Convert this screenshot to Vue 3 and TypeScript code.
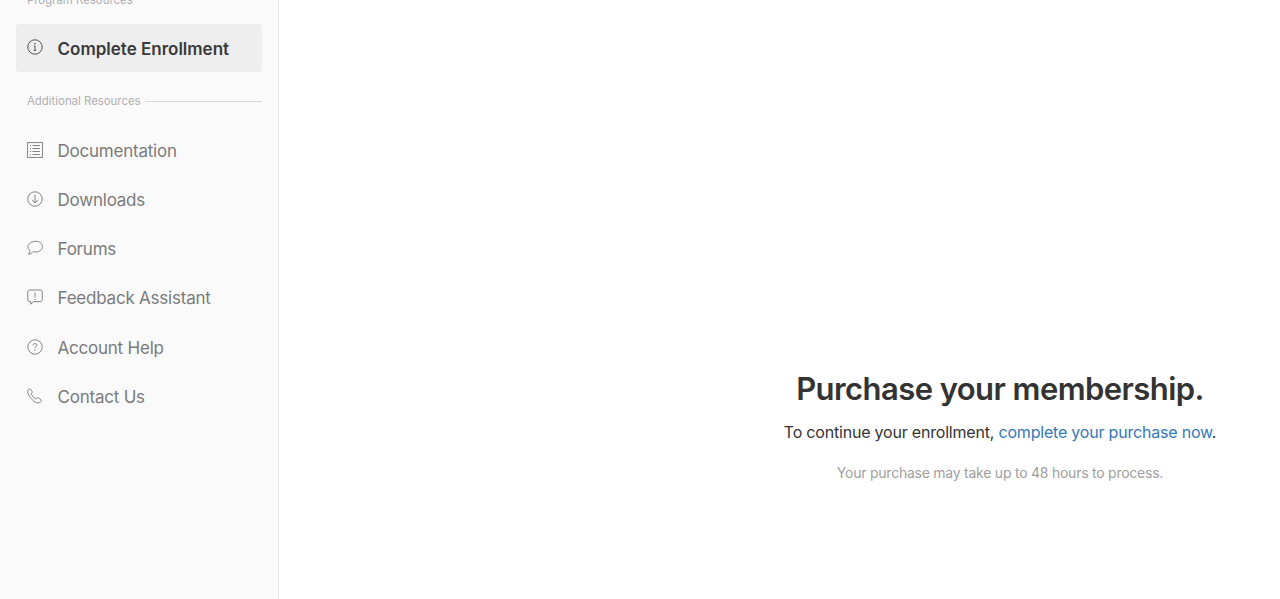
<template>
  <div class="page">
    <aside class="sidebar">
      <div class="label-top">Program Resources</div>
      <a class="item active">
        <svg class="icon" viewBox="0 0 16 16">
          <circle cx="8" cy="8" r="7.2" />
          <path d="M8 7v4.4M6.8 11.4h2.4M6.9 7h1.1" />
          <circle class="dot" cx="7.9" cy="4.8" r="0.8" />
        </svg>
        <span>Complete Enrollment</span>
      </a>
      <div class="divider">
        <span>Additional Resources</span>
        <i></i>
      </div>
      <nav class="links">
        <a class="item">
          <svg class="icon" viewBox="0 0 16 16">
            <rect x="0.6" y="0.6" width="14.8" height="14.8" />
            <path d="M3 3.500h1M5.500 3.500H13M3 6.500h1M5.500 6.500H13M3 9.500h1M5.500 9.500H13M3 12.500h1M5.500 12.500H13" />
          </svg>
          <span>Documentation</span>
        </a>
        <a class="item">
          <svg class="icon" viewBox="0 0 16 16">
            <circle cx="8" cy="8" r="7.2" />
            <path d="M8 3.800v8M4.900 8.800 8 11.900l3.100-3.100" />
          </svg>
          <span>Downloads</span>
        </a>
        <a class="item">
          <svg class="icon" viewBox="0 0 16 16">
            <path d="M9 1.300c3.500 0 6.400 2.300 6.400 5.300S12.500 12 9 12c-1 0-1.900-.2-2.800-.5-.9 1.200-2.400 2.400-4.700 2.800.9-1.100 1.500-2.300 1.600-3.800C1.800 9.500.9 8.100.9 6.600c0-3 4.300-5.300 8.100-5.300Z" />
          </svg>
          <span>Forums</span>
        </a>
        <a class="item">
          <svg class="icon" viewBox="0 0 16 16">
            <path d="M2.600 1h10.800c1.100 0 1.800.7 1.800 1.800v8c0 1.100-.7 1.800-1.800 1.800H6.600l-2.800 2.600v-2.600H2.600c-1.100 0-1.800-.7-1.800-1.800v-8C.8 1.700 1.500 1 2.600 1Z" />
            <path d="M8 3.500v5" />
            <circle class="dot" cx="8" cy="10.400" r="0.7" />
          </svg>
          <span>Feedback Assistant</span>
        </a>
        <a class="item">
          <svg class="icon" viewBox="0 0 16 16">
            <circle cx="8" cy="8" r="7.2" />
            <path d="M6.200 6.300c0-1.100.8-1.800 1.900-1.800s1.800.7 1.800 1.600c0 1.400-1.900 1.500-1.900 3" />
            <circle class="dot" cx="8" cy="11.200" r="0.7" />
          </svg>
          <span>Account Help</span>
        </a>
        <a class="item">
          <svg class="icon" viewBox="0 0 16 16">
            <path d="M2 .9c.4-.3.9-.2 1.200.1l2 2.400c.3.4.3.8 0 1.200l-.9 1.100c-.2.2-.2.500 0 .8.9 1.600 2.300 3.100 3.900 4.200.3.200.6.200.8 0l1.200-.9c.4-.3.8-.3 1.200 0l2.600 1.900c.4.3.5.9.2 1.300-.8 1.200-1.900 2-3.200 2C7.800 15 1 8.500.7 4 .6 2.800 1 1.700 2 .9Z" />
          </svg>
          <span>Contact Us</span>
        </a>
      </nav>
    </aside>
    <main class="main">
      <h1>Purchase your membership.</h1>
      <p class="lead">To continue your enrollment, <a>complete your purchase now</a>.</p>
      <p class="note">Your purchase may take up to 48 hours to process.</p>
    </main>
  </div>
</template>

<script setup lang="ts">
</script>

<style>
html,
body {
  margin: 0;
  overflow: hidden;
}
</style>

<style scoped>
.page {
  display: flex;
  height: 599px;
  overflow: hidden;
  background: #fff;
  font-family: Inter, "Liberation Sans", sans-serif;
}

.sidebar {
  width: 279px;
  flex: none;
  box-sizing: border-box;
  padding: 0 16px;
  background: #fafafa;
  border-right: 1px solid #e8e8e8;
}

.label-top {
  height: 24px;
  margin-top: -7px;
  padding: 0 11px;
  margin-bottom: 7px;
  font-size: 11.4px;
  line-height: 14px;
  color: #b0b0b0;
}

.item {
  display: flex;
  align-items: center;
  height: 48px;
  margin-bottom: 1.2px;
  padding: 0 11px;
  border-radius: 4px;
  font-size: 17px;
  letter-spacing: -0.22px;
  color: #7a7a7a;
}

.item.active {
  width: 246px;
  box-sizing: border-box;
  margin-bottom: 0;
  background: #eee;
  color: #3a3a3a;
  font-weight: 600;
  letter-spacing: 0;
}

.item.active span {
  padding-top: 1px;
}

.icon {
  width: 16px;
  height: 16px;
  flex: none;
  margin-right: 14.5px;
  margin-top: -2px;
  fill: none;
  stroke: #777;
  stroke-width: 0.9;
}

.item.active .icon {
  margin-top: -3px;
  stroke: #444;
}

.icon .dot {
  fill: #777;
  stroke: none;
}

.item.active .icon .dot {
  fill: #444;
}

.divider {
  display: flex;
  align-items: center;
  gap: 4px;
  height: 14px;
  margin-top: 22px;
  margin-bottom: 18.8px;
  padding-left: 11px;
  font-size: 11.4px;
  color: #b0b0b0;
}

.divider i {
  flex: 1;
  height: 1px;
  background: #d8d8d8;
}

.main {
  flex: 1;
  box-sizing: border-box;
  padding: 370px 0 0 441px;
  text-align: center;
}

h1 {
  margin: 0;
  font-size: 31px;
  line-height: 38px;
  letter-spacing: -0.56px;
  font-weight: 600;
  color: #333;
  white-space: nowrap;
}

.lead {
  margin: 14px 0 0;
  font-size: 16px;
  line-height: 20px;
  letter-spacing: -0.2px;
  color: #333;
  white-space: nowrap;
}

.lead a {
  color: #3577b8;
}

.note {
  margin: 21px 0 0;
  font-size: 14px;
  line-height: 20px;
  letter-spacing: -0.24px;
  color: #a0a0a0;
  white-space: nowrap;
}
</style>
